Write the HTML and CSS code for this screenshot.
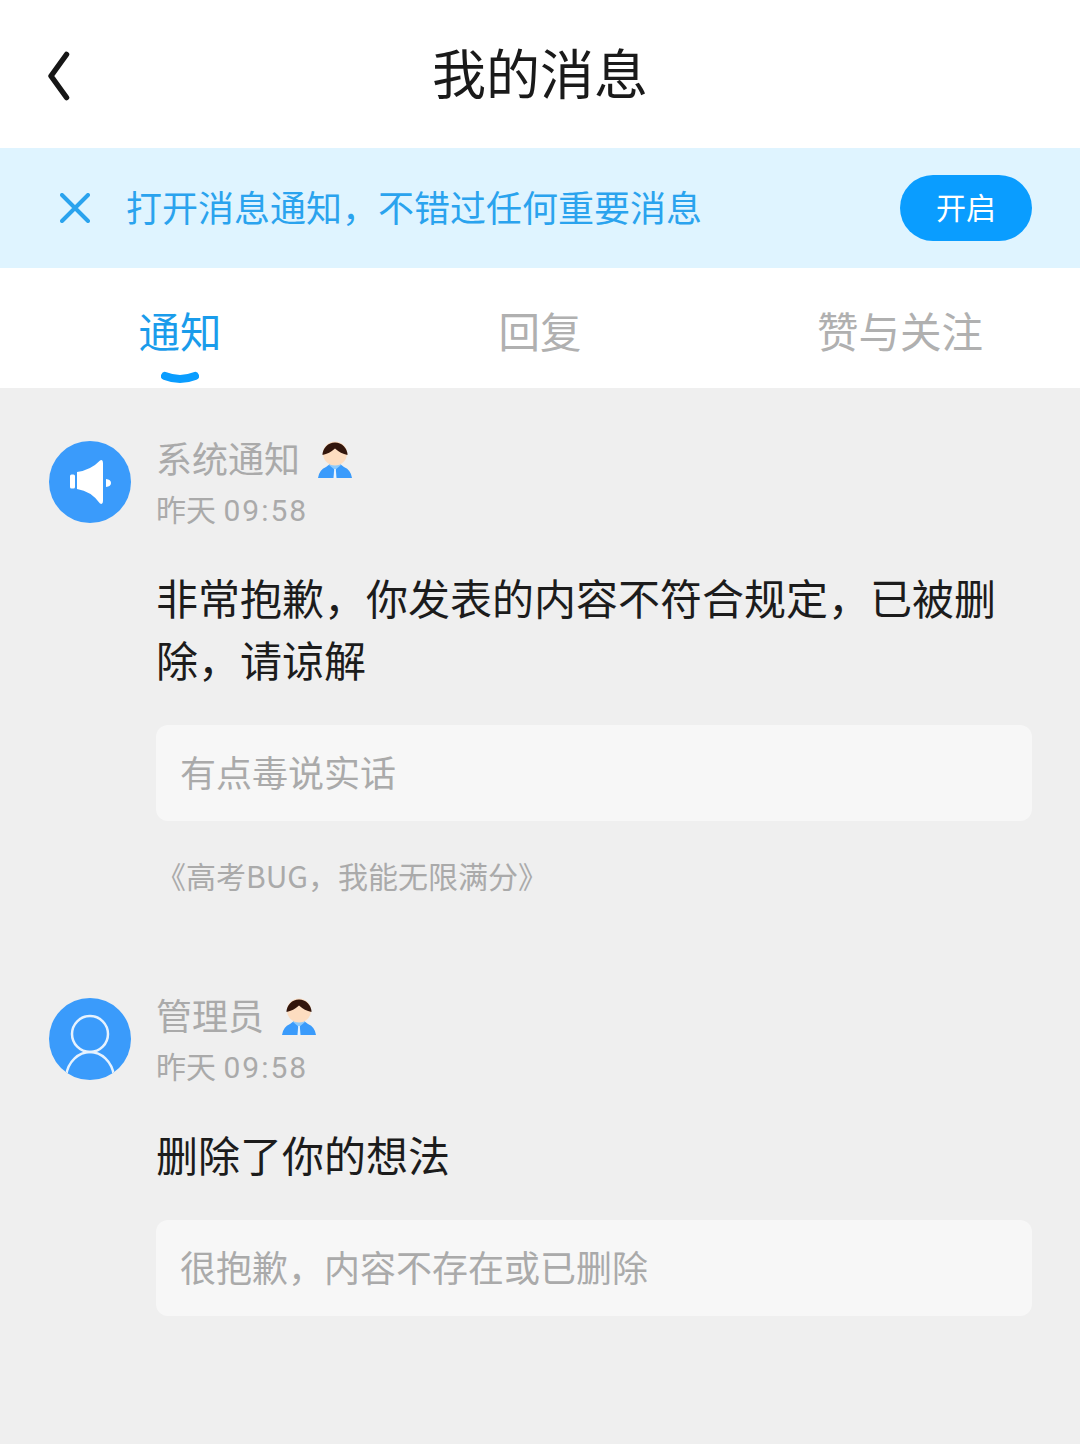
FILE: index.html
```html
<!DOCTYPE html>
<html lang="zh-CN">

<head>
    <meta charset="UTF-8">
    <meta name="viewport" content="width=device-width, initial-scale=1.0">
    <title>我的消息</title>
    <link rel="stylesheet" href="styles.css">
</head>

<body>
    <div class="page">
        <!-- 顶部标题栏 -->
        <header class="topbar">
            <svg class="back" viewBox="0 0 24 50" width="24" height="50">
                <path d="M19.500 3.500 L4 25 L19.500 46.500" fill="none" stroke="#161616" stroke-width="5.500" stroke-linecap="round" stroke-linejoin="round"></path>
            </svg>
            <h1 class="title">我的消息</h1>
        </header>

        <!-- 通知提示条 -->
        <div class="notice">
            <svg class="notice-close" viewBox="0 0 30 30" width="30" height="30">
                <path d="M2 2 L28 28 M28 2 L2 28" fill="none" stroke="#2aa3ee" stroke-width="4" stroke-linecap="round"></path>
            </svg>
            <span class="notice-text">打开消息通知，不错过任何重要消息</span>
            <span class="notice-btn">开启</span>
        </div>

        <!-- 标签 -->
        <nav class="tabs">
            <div class="tab sel">通知
                <svg class="tab-mark" viewBox="0 0 38 13" width="38" height="13">
                    <path d="M4 5 Q19 11 34 5" fill="none" stroke="#0a9dff" stroke-width="8" stroke-linecap="round"></path>
                </svg>
            </div>
            <div class="tab">回复</div>
            <div class="tab">赞与关注</div>
        </nav>

        <!-- 消息列表 -->
        <main class="list">
            <section class="msg">
                <div class="msg-head">
                    <svg class="avatar" viewBox="0 0 82 82" width="82" height="82">
                        <circle cx="41" cy="41" r="41" fill="#3a9bfb"></circle>
                        <rect x="21" y="33.500" width="5" height="14" rx="1.500" fill="#fff"></rect>
                        <path d="M28 31 Q42 29 51 19.500 Q54 18 54 22 L54 60 Q54 64 51 62.500 Q42 50 28 48 z" fill="#fff"></path>
                        <path d="M57 38 Q62 38.500 62 42 Q62 45.500 57 46 z" fill="#fff"></path>
                    </svg>
                    <div class="msg-who">
                        <div class="msg-name">系统通知
                            <svg class="badge" viewBox="0 0 34 37" width="34" height="37">
                                <use href="#staff"></use>
                            </svg>
                        </div>
                        <div class="msg-time">昨天 <span class="clock">09:58</span></div>
                    </div>
                </div>
                <p class="msg-body">非常抱歉，你发表的内容不符合规定，已被删除，请谅解</p>
                <div class="quote">有点毒说实话</div>
                <div class="source">《高考BUG，我能无限满分》</div>
            </section>

            <section class="msg">
                <div class="msg-head">
                    <svg class="avatar" viewBox="0 0 82 82" width="82" height="82">
                        <defs>
                            <clipPath id="round">
                                <circle cx="41" cy="41" r="41"></circle>
                            </clipPath>
                        </defs>
                        <circle cx="41" cy="41" r="41" fill="#3a9bfb"></circle>
                        <g clip-path="url(#round)" fill="none" stroke="#e6f2fe" stroke-width="2.500">
                            <circle cx="41" cy="36" r="18"></circle>
                            <path d="M17 78 C19 63 30 54 41 54 C52 54 63 63 65 78"></path>
                        </g>
                    </svg>
                    <div class="msg-who">
                        <div class="msg-name">管理员
                            <svg class="badge" viewBox="0 0 34 37" width="34" height="37">
                                <use href="#staff"></use>
                            </svg>
                        </div>
                        <div class="msg-time">昨天 <span class="clock">09:58</span></div>
                    </div>
                </div>
                <p class="msg-body">删除了你的想法</p>
                <div class="quote">很抱歉，内容不存在或已删除</div>
            </section>
        </main>
    </div>

    <!-- 小人图标 -->
    <svg class="defs" width="0" height="0">
        <symbol id="staff" viewBox="0 0 34 37">
            <path d="M0 37 Q1 29 8 26 L12 23 L22 23 L26 26 Q33 29 34 37 z" fill="#3a9bfb"></path>
            <path d="M11 24 L17 29 L23 24 L22 21 L12 21 z" fill="#8ecbfc"></path>
            <circle cx="17" cy="12.500" r="12" fill="#fdddc0"></circle>
            <path d="M4.500 14 A12.500 12.500 0 0 1 29.500 14 Q22.500 12.500 17 7.500 Q11.500 12.500 4.500 14 z" fill="#33160c"></path>
            <path d="M16.200 28 h1.600 l.7 9 h-3 z" fill="#e6f3ff"></path>
        </symbol>
    </svg>
</body>

</html>
```

FILE: styles.css
```css
* {
    box-sizing: border-box;
    margin: 0;
    padding: 0;
}

body {
    background: #fff;
    font-family: "Noto Sans CJK SC", "Noto Sans", sans-serif;
}

.page {
    width: 1080px;
    height: 1444px;
    background: #efefef;
    overflow: hidden;
}

.defs {
    position: absolute;
}

.topbar {
    height: 148px;
    padding-bottom: 4px;
    background: #fff;
    display: flex;
    align-items: center;
    justify-content: center;
    position: relative;
}

.back {
    position: absolute;
    left: 47px;
    top: 51px;
}

.title {
    font-size: 54px;
    font-weight: 400;
    line-height: 1;
    color: #1a1a1a;
}

.notice {
    height: 120px;
    background: #dff4ff;
    display: flex;
    align-items: center;
    padding: 0 48px 0 60px;
}

.notice-text {
    margin: 0 0 4px 36px;
    font-size: 36px;
    color: #2aa3ee;
    flex: 1;
}

.notice-btn {
    width: 132px;
    height: 66px;
    padding-bottom: 4px;
    border-radius: 33px;
    background: #0a9dff;
    color: #fff;
    font-size: 30px;
    display: flex;
    align-items: center;
    justify-content: center;
}

.tabs {
    height: 120px;
    background: #fff;
    display: grid;
    grid-template-columns: repeat(3, 360px);
}

.tab {
    position: relative;
    text-align: center;
    font-size: 41.500px;
    line-height: 124px;
    color: #b0b0b0;
}

.tab.sel {
    color: #1a9ceb;
}

.tab-mark {
    position: absolute;
    left: 161px;
    top: 103px;
}

.list {
    padding: 53px 48px 0 49px;
}

.msg {
    margin-bottom: 101px;
}

.msg-head {
    display: flex;
    gap: 25px;
}

.msg-name {
    display: flex;
    align-items: flex-start;
    gap: 18px;
    height: 40px;
    font-size: 36px;
    line-height: 32px;
    color: #aaa;
    white-space: nowrap;
}

.msg-time {
    margin-top: 10px;
    font-size: 30px;
    line-height: 40px;
    color: #aaa;
    font-family: Roboto, "Noto Sans CJK SC", sans-serif;
}

.clock {
    letter-spacing: 2px;
}

.badge {
    display: block;
}

.msg-body {
    margin: 35px 0 0 107px;
    font-size: 42px;
    line-height: 62px;
    color: #1c1c1c;
}

.quote {
    margin: 35px 0 0 107px;
    height: 96px;
    padding-left: 24px;
    border-radius: 12px;
    background: #f7f7f7;
    font-size: 36px;
    line-height: 92px;
    color: #aaa;
}

.source {
    margin: 32px 0 0 107px;
    font-size: 30px;
    line-height: 44px;
    color: #aaa;
}
```
